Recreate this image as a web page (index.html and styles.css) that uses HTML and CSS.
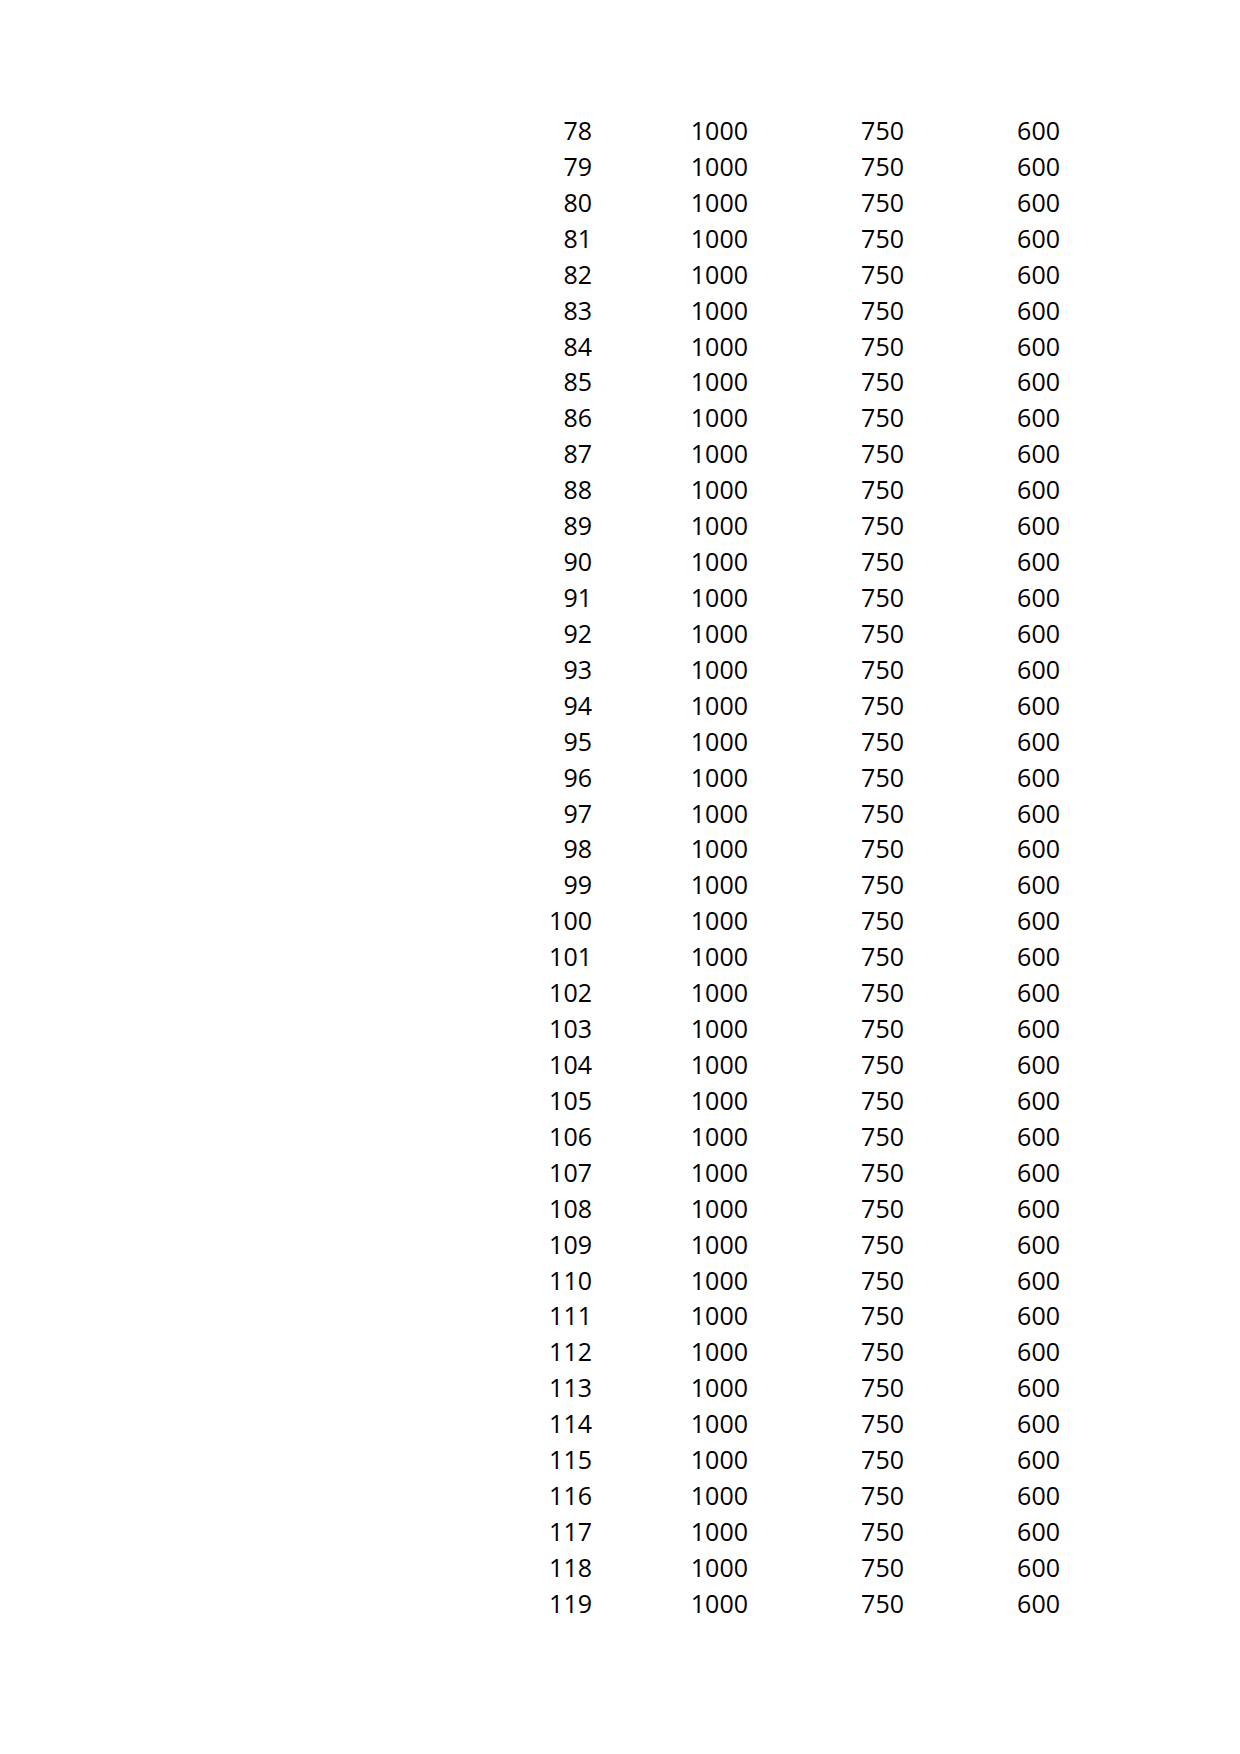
FILE: index.html
```html
<!DOCTYPE html>
<html>
<head>
<meta charset="utf-8">
<link rel="stylesheet" href="styles.css">
</head>
<body>
<div class="sheet">
<div class="row"><span>78</span><span>1000</span><span>750</span><span>600</span></div>
<div class="row"><span>79</span><span>1000</span><span>750</span><span>600</span></div>
<div class="row"><span>80</span><span>1000</span><span>750</span><span>600</span></div>
<div class="row"><span>81</span><span>1000</span><span>750</span><span>600</span></div>
<div class="row"><span>82</span><span>1000</span><span>750</span><span>600</span></div>
<div class="row"><span>83</span><span>1000</span><span>750</span><span>600</span></div>
<div class="row"><span>84</span><span>1000</span><span>750</span><span>600</span></div>
<div class="row"><span>85</span><span>1000</span><span>750</span><span>600</span></div>
<div class="row"><span>86</span><span>1000</span><span>750</span><span>600</span></div>
<div class="row"><span>87</span><span>1000</span><span>750</span><span>600</span></div>
<div class="row"><span>88</span><span>1000</span><span>750</span><span>600</span></div>
<div class="row"><span>89</span><span>1000</span><span>750</span><span>600</span></div>
<div class="row"><span>90</span><span>1000</span><span>750</span><span>600</span></div>
<div class="row"><span>91</span><span>1000</span><span>750</span><span>600</span></div>
<div class="row"><span>92</span><span>1000</span><span>750</span><span>600</span></div>
<div class="row"><span>93</span><span>1000</span><span>750</span><span>600</span></div>
<div class="row"><span>94</span><span>1000</span><span>750</span><span>600</span></div>
<div class="row"><span>95</span><span>1000</span><span>750</span><span>600</span></div>
<div class="row"><span>96</span><span>1000</span><span>750</span><span>600</span></div>
<div class="row"><span>97</span><span>1000</span><span>750</span><span>600</span></div>
<div class="row"><span>98</span><span>1000</span><span>750</span><span>600</span></div>
<div class="row"><span>99</span><span>1000</span><span>750</span><span>600</span></div>
<div class="row"><span>100</span><span>1000</span><span>750</span><span>600</span></div>
<div class="row"><span>101</span><span>1000</span><span>750</span><span>600</span></div>
<div class="row"><span>102</span><span>1000</span><span>750</span><span>600</span></div>
<div class="row"><span>103</span><span>1000</span><span>750</span><span>600</span></div>
<div class="row"><span>104</span><span>1000</span><span>750</span><span>600</span></div>
<div class="row"><span>105</span><span>1000</span><span>750</span><span>600</span></div>
<div class="row"><span>106</span><span>1000</span><span>750</span><span>600</span></div>
<div class="row"><span>107</span><span>1000</span><span>750</span><span>600</span></div>
<div class="row"><span>108</span><span>1000</span><span>750</span><span>600</span></div>
<div class="row"><span>109</span><span>1000</span><span>750</span><span>600</span></div>
<div class="row"><span>110</span><span>1000</span><span>750</span><span>600</span></div>
<div class="row"><span>111</span><span>1000</span><span>750</span><span>600</span></div>
<div class="row"><span>112</span><span>1000</span><span>750</span><span>600</span></div>
<div class="row"><span>113</span><span>1000</span><span>750</span><span>600</span></div>
<div class="row"><span>114</span><span>1000</span><span>750</span><span>600</span></div>
<div class="row"><span>115</span><span>1000</span><span>750</span><span>600</span></div>
<div class="row"><span>116</span><span>1000</span><span>750</span><span>600</span></div>
<div class="row"><span>117</span><span>1000</span><span>750</span><span>600</span></div>
<div class="row"><span>118</span><span>1000</span><span>750</span><span>600</span></div>
<div class="row"><span>119</span><span>1000</span><span>750</span><span>600</span></div>
</div>
</body>
</html>
```
FILE: styles.css
```css
html, body {
  margin: 0;
  background: #fff;
}
.sheet {
  padding: 113px 0 0 436px;
  font-family: "Open Sans", "Noto Sans", sans-serif;
  font-size: 25px;
  color: #000;
}
.row {
  display: grid;
  grid-template-columns: repeat(4, 156px);
  height: 35.93px;
  line-height: 35.93px;
}
.row span {
  text-align: right;
}
```
